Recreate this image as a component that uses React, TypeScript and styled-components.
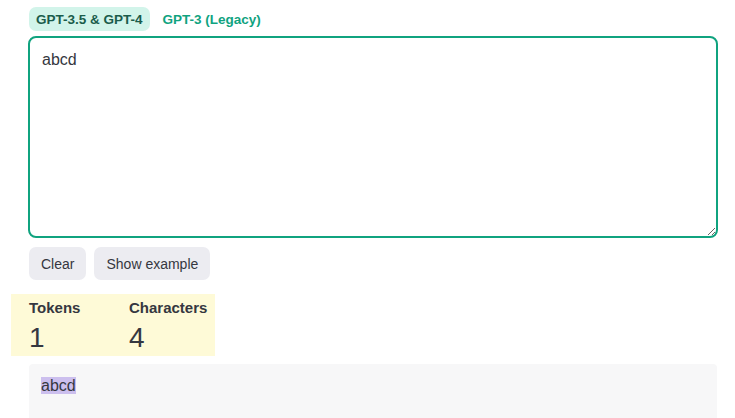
import React from "react";
import styled, { createGlobalStyle } from "styled-components";

const Global = createGlobalStyle`
  html, body { margin: 0; padding: 0; background: #ffffff; }
  body { font-family: "Liberation Sans", Arial, sans-serif; color: #353740; }
  * { box-sizing: border-box; }
`;

const Page = styled.div`
  width: 735px;
  height: 418px;
  overflow: hidden;
  display: flex;
  flex-direction: column;
  padding: 7px 17px 0 28px;
`;

const Tabs = styled.div`
  display: flex;
  align-items: center;
  margin-left: 1px;
  height: 24px;
`;

const Tab = styled.button<{ $active?: boolean }>`
  font-family: "Liberation Sans", Arial, sans-serif;
  font-size: 13.5px;
  font-weight: 700;
  height: 24px;
  padding: 0 7px;
  margin-right: 6px;
  border: none;
  border-radius: 7px;
  background: ${(p) => (p.$active ? "#d2f4ea" : "transparent")};
  color: ${(p) => (p.$active ? "#1a5c4b" : "#10a37f")};
  cursor: pointer;
`;

const Editor = styled.textarea`
  display: block;
  margin-top: 5px;
  width: 690px;
  height: 202px;
  border: 2px solid #10a37f;
  border-radius: 8px;
  padding: 12px 12px;
  font-family: "Liberation Sans", Arial, sans-serif;
  font-size: 16px;
  line-height: 20px;
  color: #353740;
  outline: none;
  resize: vertical;
  background: #fff;
`;

const Actions = styled.div`
  display: flex;
  gap: 8px;
  margin-top: 9px;
  margin-left: 1px;
`;

const Button = styled.button`
  font-family: "Liberation Sans", Arial, sans-serif;
  font-size: 14px;
  height: 33px;
  padding: 0 12px;
  border: none;
  border-radius: 7px;
  background: #ececf1;
  color: #353740;
  cursor: pointer;
`;

const Stats = styled.div`
  align-self: flex-start;
  display: flex;
  margin-top: 14px;
  margin-left: -17px;
  padding: 4px 8px 0 18px;
  background: #fefad7;
  height: 62px;
`;

const Stat = styled.div<{ $width?: number }>`
  display: flex;
  flex-direction: column;
  gap: 2px;
  width: ${(p) => (p.$width ? `${p.$width}px` : "auto")};
`;

const StatLabel = styled.div`
  font-size: 15px;
  line-height: 20px;
  font-weight: 700;
  color: #353740;
`;

const StatValue = styled.div`
  font-size: 28px;
  line-height: 36px;
  color: #353740;
`;

const Output = styled.div`
  margin-top: 8px;
  margin-left: 1px;
  width: 688px;
  flex: 1;
  background: #f7f7f8;
  border-radius: 4px 4px 0 0;
  padding: 10px 12px;
  font-size: 16px;
  line-height: 24px;
  color: #353740;
`;

const TokenSpan = styled.span`
  background: rgba(107, 64, 216, 0.3);
`;

export default function App() {
  return (
    <>
      <Global />
      <Page>
        <Tabs>
          <Tab $active>GPT-3.5 &amp; GPT-4</Tab>
          <Tab>GPT-3 (Legacy)</Tab>
        </Tabs>
        <Editor defaultValue="abcd" autoFocus spellCheck />
        <Actions>
          <Button>Clear</Button>
          <Button>Show example</Button>
        </Actions>
        <Stats>
          <Stat $width={100}>
            <StatLabel>Tokens</StatLabel>
            <StatValue>1</StatValue>
          </Stat>
          <Stat>
            <StatLabel>Characters</StatLabel>
            <StatValue>4</StatValue>
          </Stat>
        </Stats>
        <Output>
          <TokenSpan>abcd</TokenSpan>
        </Output>
      </Page>
    </>
  );
}
